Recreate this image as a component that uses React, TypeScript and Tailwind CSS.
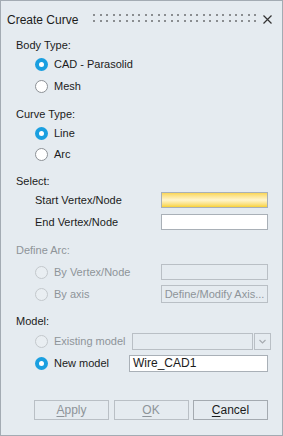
import type { ReactNode } from 'react'

// ── Radio ───────────────────────────────────────────────────────────────────

function Radio({ checked, disabled }: { checked?: boolean; disabled?: boolean }) {
  if (checked) {
    return (
      <span className="w-[13px] h-[13px] rounded-full bg-[#1a9fe0] flex items-center justify-center shrink-0">
        <span className="w-[5px] h-[5px] rounded-full bg-white" />
      </span>
    )
  }
  return (
    <span
      className={
        disabled
          ? 'w-[13px] h-[13px] rounded-full border border-[#c3c8cc] bg-[#e9eef2] shrink-0'
          : 'w-[13px] h-[13px] rounded-full border border-[#8c9196] bg-white shrink-0'
      }
    />
  )
}

function Row({ className, children }: { className: string; children: ReactNode }) {
  return <div className={`h-[18px] flex items-center whitespace-nowrap ${className}`}>{children}</div>
}

function Btn({ u, rest, disabled }: { u: string; rest: string; disabled?: boolean }) {
  return (
    <div
      className={
        disabled
          ? 'w-[75px] h-[20px] border border-[#b9bfc5] flex items-center justify-center text-[#8e9499]'
          : 'w-[75px] h-[20px] border border-[#a4aab0] flex items-center justify-center text-[#1b1b1b]'
      }
    >
      <span>
        <span className="underline underline-offset-2">{u}</span>
        {rest}
      </span>
    </div>
  )
}

export default function App() {
  const dots = Array.from({ length: 26 })

  return (
    <div
      className="w-[283px] h-[436px] border border-[#a3abb3] bg-[#e5ebf0] text-[11px] text-[#1b1b1b] flex flex-col"
      style={{ fontFamily: '"Liberation Sans", Arial, sans-serif' }}
    >
      {/* Title bar */}
      <div className="h-[18px] mt-[10px] flex items-center pl-[6px] pr-[10px]">
        <span className="text-[12px]">Create Curve</span>
        <div className="ml-[15px] w-[163px] flex flex-col gap-[4px] -mt-[4px]">
          <div className="flex justify-between">
            {dots.map((_, i) => (
              <span key={i} className="w-[2px] h-[2px] bg-[#8a8d90]" />
            ))}
          </div>
          <div className="flex justify-between">
            {dots.map((_, i) => (
              <span key={i} className="w-[2px] h-[2px] bg-[#8a8d90]" />
            ))}
          </div>
        </div>
        <svg className="ml-auto -mt-[2px]" width="9" height="9" viewBox="0 0 9 9">
          <path d="M0.5 0.5 L8.5 8.5 M8.5 0.5 L0.5 8.5" stroke="#333" strokeWidth="1.2" />
        </svg>
      </div>

      {/* Body Type */}
      <Row className="mt-[7px] pl-[15px]">Body Type:</Row>
      <Row className="mt-[1px] pl-[34px] gap-[6px]">
        <Radio checked />
        <span>CAD - Parasolid</span>
      </Row>
      <Row className="mt-[4px] pl-[34px] gap-[6px]">
        <Radio />
        <span>Mesh</span>
      </Row>

      {/* Curve Type */}
      <Row className="mt-[10px] pl-[15px]">Curve Type:</Row>
      <Row className="mt-[1px] pl-[34px] gap-[6px]">
        <Radio checked />
        <span>Line</span>
      </Row>
      <Row className="mt-[3px] pl-[34px] gap-[6px]">
        <Radio />
        <span>Arc</span>
      </Row>

      {/* Select */}
      <Row className="mt-[9px] pl-[15px]">Select:</Row>
      <Row className="mt-[1px] pl-[34px] pr-[14px] justify-between">
        <span>Start Vertex/Node</span>
        <div className="w-[107px] h-[16px] border border-[#a9b0b7] bg-linear-to-b from-[#fad654] via-[#fff5cc] to-[#f8d232]" />
      </Row>
      <Row className="mt-[4px] pl-[34px] pr-[14px] justify-between">
        <span>End Vertex/Node</span>
        <div className="w-[107px] h-[16px] border border-[#a9b0b7] bg-white" />
      </Row>

      {/* Define Arc (disabled) */}
      <Row className="mt-[10px] pl-[15px] text-[#8e9499]">Define Arc:</Row>
      <Row className="mt-[4px] pl-[34px] pr-[14px] gap-[6px] text-[#8e9499]">
        <Radio disabled />
        <span>By Vertex/Node</span>
        <div className="ml-auto w-[107px] h-[16px] border border-[#b9bfc5] shrink-0" />
      </Row>
      <Row className="mt-[4px] pl-[34px] pr-[14px] gap-[6px] text-[#8e9499]">
        <Radio disabled />
        <span>By axis</span>
        <div className="ml-auto w-[107px] h-[18px] border border-[#b9bfc5] flex items-center justify-center shrink-0">
          Define/Modify Axis...
        </div>
      </Row>

      {/* Model */}
      <Row className="mt-[9px] pl-[15px]">Model:</Row>
      <Row className="mt-[2px] pl-[34px] pr-[14px] gap-[6px] text-[#8e9499]">
        <Radio disabled />
        <span>Existing model</span>
        <div className="ml-auto flex gap-[1px] shrink-0">
          <div className="w-[121px] h-[17px] border border-[#b9bfc5]" />
          <div className="w-[17px] h-[17px] border border-[#b9bfc5] flex items-center justify-center">
            <svg width="7" height="5" viewBox="0 0 7 5">
              <path d="M0.5 1 L3.5 4 L6.5 1" stroke="#a6abb0" strokeWidth="1.2" fill="none" />
            </svg>
          </div>
        </div>
      </Row>
      <Row className="mt-[4px] pl-[34px] pr-[14px] gap-[6px]">
        <Radio checked />
        <span>New model</span>
        <div className="ml-auto w-[139px] h-[17px] border border-[#a9b0b7] bg-white flex items-center pl-[3px] text-[12px] shrink-0">
          Wire_CAD1
        </div>
      </Row>

      {/* Buttons */}
      <div className="mt-[28px] pl-[33px] pr-[14px] flex justify-between text-[12px]">
        <Btn u="A" rest="pply" disabled />
        <Btn u="O" rest="K" disabled />
        <Btn u="C" rest="ancel" />
      </div>
    </div>
  )
}
